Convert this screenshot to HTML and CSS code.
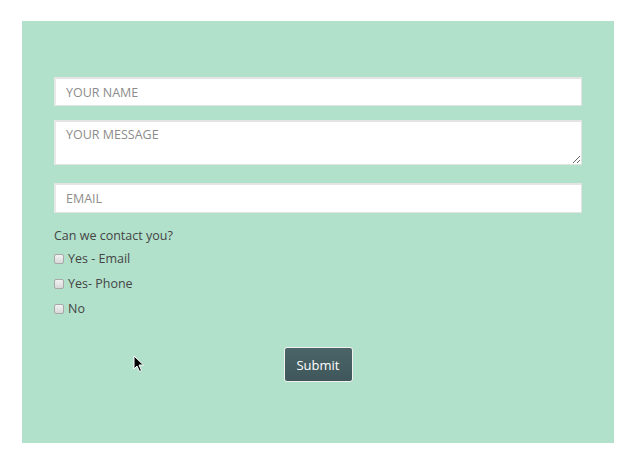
FILE: index.html
```html
<!DOCTYPE html>
<html>
<head>
<meta charset="utf-8">
<link rel="stylesheet" href="styles.css">
</head>
<body>
<div class="panel">
  <form class="form">
    <input class="field field-name" type="text" placeholder="YOUR NAME">
    <textarea class="field field-msg" placeholder="YOUR MESSAGE"></textarea>
    <input class="field field-email" type="text" placeholder="EMAIL">
    <p class="question">Can we contact you?</p>
    <label class="opt"><input type="checkbox" class="cb"><span>Yes - Email</span></label>
    <label class="opt"><input type="checkbox" class="cb"><span>Yes- Phone</span></label>
    <label class="opt"><input type="checkbox" class="cb"><span>No</span></label>
    <div class="actions"><button type="button" class="submit">Submit</button></div>
  </form>
  <svg class="cursor" width="12" height="18" viewBox="0 0 12 18"><path d="M1 1 L1 14 L4 11 L6.5 16.5 L8.5 15.5 L6 10 L10.5 10 Z" fill="#000" stroke="#fff" stroke-width="1"/></svg>
</div>
</body>
</html>
```
FILE: styles.css
```css
html, body { margin: 0; padding: 0; background: #fff; }
body { font-family: "Open Sans", sans-serif; }
.panel {
  position: relative;
  margin: 21px 0 0 22px;
  width: 592px;
  height: 422px;
  background: #b1e0cb;
  box-sizing: border-box;
  padding: 56px 32px 0 32px;
}
.form { display: flex; flex-direction: column; align-items: flex-start; }
.field {
  box-sizing: border-box;
  width: 528px;
  margin: 0;
  border: 1px solid #e2e2e2;
  border-top: 2px solid #e4e4e4;
  border-left: 2px solid #e8e8e8;
  background: #fff;
  font-family: "Open Sans", sans-serif;
  font-size: 12.5px;
  color: #555;
  padding: 0 10px;
  outline: none;
}
.field::placeholder { color: #8c8c8c; }
.field-name { height: 29px; }
.field-msg { height: 45px; margin-top: 14px; padding-top: 4px; resize: vertical; display: block; }
.field-email { height: 30px; margin-top: 18px; }
.question { margin: 14px 0 0 0; font-size: 12.5px; color: #454545; line-height: 17px; }
.opt { display: flex; align-items: center; height: 25px; font-size: 12.5px; color: #454545; }
.opt:first-of-type { margin-top: 2px; }
.cb {
  appearance: none;
  -webkit-appearance: none;
  width: 10px; height: 10px;
  margin: 1px 4px 0 0;
  border: 1px solid #a8a8a8;
  border-radius: 2px;
  background: linear-gradient(#f2f2f2, #d8d8d8);
  box-sizing: border-box;
}
.actions { align-self: stretch; display: flex; justify-content: center; margin-top: 26px; }
.submit {
  box-sizing: border-box;
  width: 69px; height: 35px;
  border: 1px solid #f0f0f0;
  border-radius: 3px;
  background: linear-gradient(#4a6468, #3f575b);
  color: #fff;
  font-family: "Open Sans", sans-serif;
  font-size: 13px;
  padding: 0;
}
.cursor { position: absolute; left: 111px; top: 334px; }
```
